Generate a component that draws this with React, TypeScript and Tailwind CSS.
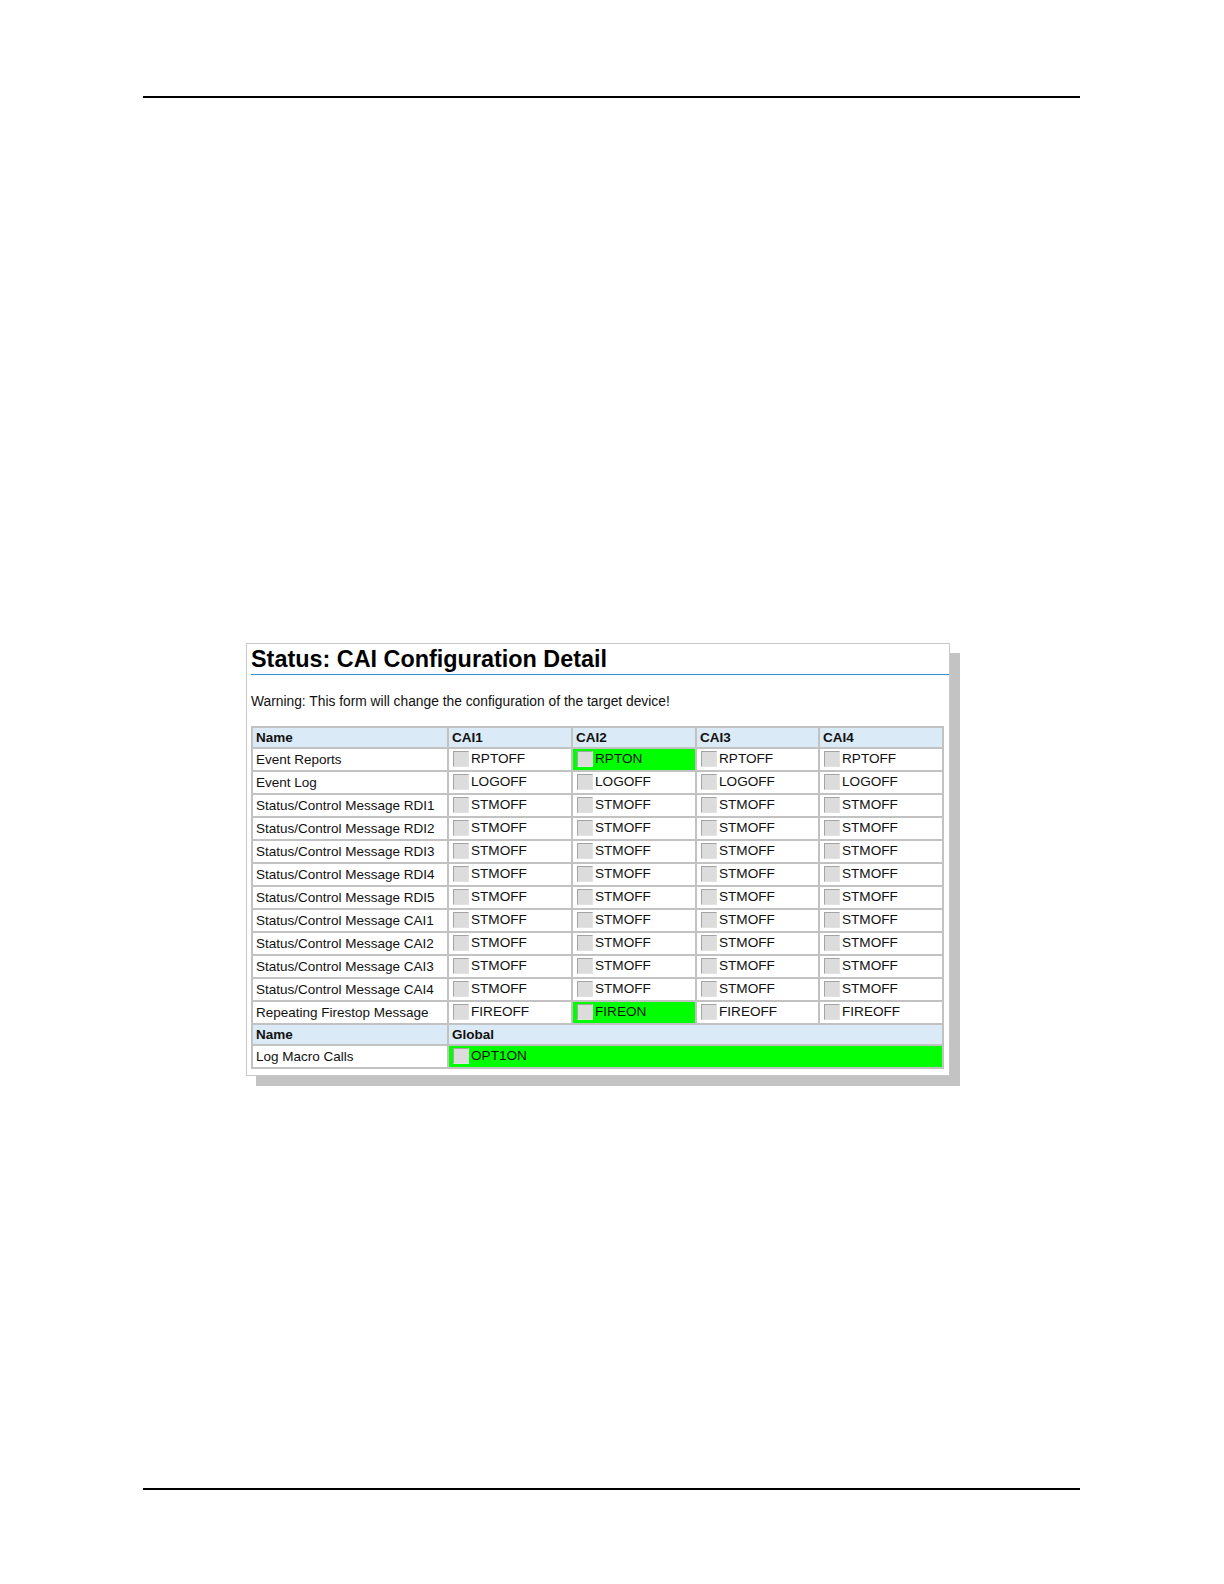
import React from "react";

type Cell = { label: string; on?: boolean };

const rows: { name: string; cells: Cell[] }[] = [
  { name: "Event Reports", cells: [{ label: "RPTOFF" }, { label: "RPTON", on: true }, { label: "RPTOFF" }, { label: "RPTOFF" }] },
  { name: "Event Log", cells: [{ label: "LOGOFF" }, { label: "LOGOFF" }, { label: "LOGOFF" }, { label: "LOGOFF" }] },
  ...["RDI1", "RDI2", "RDI3", "RDI4", "RDI5", "CAI1", "CAI2", "CAI3", "CAI4"].map((s) => ({
    name: `Status/Control Message ${s}`,
    cells: [{ label: "STMOFF" }, { label: "STMOFF" }, { label: "STMOFF" }, { label: "STMOFF" }],
  })),
  { name: "Repeating Firestop Message", cells: [{ label: "FIREOFF" }, { label: "FIREON", on: true }, { label: "FIREOFF" }, { label: "FIREOFF" }] },
];

function Box() {
  return (
    <span className="inline-block w-[16px] h-[16px] shrink-0 bg-[#dcdcdc] border border-t-[#a4a4a4] border-l-[#a4a4a4] border-r-[#e2e2e2] border-b-[#e2e2e2]" />
  );
}

function OptCell({ c, colSpan }: { c: Cell; colSpan?: number }) {
  return (
    <td
      colSpan={colSpan}
      className={`border-2 border-[#c2c2c2] h-[23px] p-0 align-top ${c.on ? "bg-[#00ff00]" : "bg-white"}`}
    >
      <div className="flex items-start pl-[4px] pt-[2px]">
        <Box />
        <span className="ml-[2px] text-[13.6px] leading-[14px] text-[#111] mt-[1px]">{c.label}</span>
      </div>
    </td>
  );
}

export default function App() {
  return (
    <div
      className="w-[1224px] h-[1584px] bg-white flex flex-col"
      style={{ fontFamily: '"Liberation Sans", Arial, sans-serif' }}
    >
      <div className="mt-[96px] ml-[143px] w-[937px] h-[2px] bg-black" />

      <div className="mt-[545px] ml-[246px] w-[704px] border border-[#c9c9c9] bg-white pl-[4px] pb-[6px] shadow-[10px_10px_0_0_#c3c3c3]">
        <div className="pt-[2px] pb-[2px] border-b border-[#2f8fd4]">
          <h1 className="text-[23.4px] leading-[26px] font-bold text-black">Status: CAI Configuration Detail</h1>
        </div>
        <p className="mt-[19px] text-[13.8px] leading-[16px] text-[#111]">
          Warning: This form will change the configuration of the target device!
        </p>
        <table className="mt-[16px] border-collapse table-fixed w-[691px] text-[13.5px] text-[#111]">
          <colgroup>
            <col className="w-[196px]" />
            <col className="w-[124px]" />
            <col className="w-[124px]" />
            <col className="w-[123px]" />
            <col className="w-[124px]" />
          </colgroup>
          <tbody>
            <tr className="bg-[#dbeaf7]">
              {["Name", "CAI1", "CAI2", "CAI3", "CAI4"].map((h) => (
                <th key={h} className="border-2 border-[#c2c2c2] h-[21px] p-0 pl-[3px] text-left font-bold text-[13.5px] leading-[16px] text-[#111]">
                  {h}
                </th>
              ))}
            </tr>
            {rows.map((r) => (
              <tr key={r.name}>
                <td className="border-2 border-[#c2c2c2] h-[23px] p-0 pl-[3px] leading-[16px] bg-white">{r.name}</td>
                {r.cells.map((c, i) => (
                  <OptCell key={i} c={c} />
                ))}
              </tr>
            ))}
            <tr className="bg-[#dbeaf7]">
              <th className="border-2 border-[#c2c2c2] h-[21px] p-0 pl-[3px] text-left font-bold text-[13.5px] leading-[16px] text-[#111]">Name</th>
              <th colSpan={4} className="border-2 border-[#c2c2c2] h-[21px] p-0 pl-[3px] text-left font-bold text-[13.5px] leading-[16px] text-[#111]">Global</th>
            </tr>
            <tr>
              <td className="border-2 border-[#c2c2c2] h-[23px] p-0 pl-[3px] leading-[16px] bg-white">Log Macro Calls</td>
              <OptCell c={{ label: "OPT1ON", on: true }} colSpan={4} />
            </tr>
          </tbody>
        </table>
      </div>

      <div className="mt-auto mb-[94px] ml-[143px] w-[937px] h-[2px] bg-black" />
    </div>
  );
}
